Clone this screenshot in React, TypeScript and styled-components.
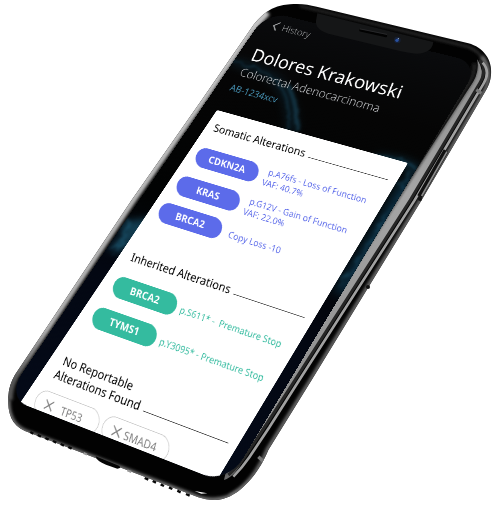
import React from "react";
import styled, { createGlobalStyle } from "styled-components";

type Point = [number, number];

/* Projects a flat width x height rectangle onto four corners (clockwise from top left). */
function projectOnto(width: number, height: number, corners: Point[]): string {
  const [[x0, y0], [x1, y1], [x2, y2], [x3, y3]] = corners;
  const dx1 = x1 - x2;
  const dx2 = x3 - x2;
  const sx = x0 - x1 + x2 - x3;
  const dy1 = y1 - y2;
  const dy2 = y3 - y2;
  const sy = y0 - y1 + y2 - y3;
  const den = dx1 * dy2 - dx2 * dy1;
  const g = (sx * dy2 - dx2 * sy) / den;
  const h = (dx1 * sy - sx * dy1) / den;
  const m = [
    (x1 - x0 + g * x1) / width, (y1 - y0 + g * y1) / width, 0, g / width,
    (x3 - x0 + h * x3) / height, (y3 - y0 + h * y3) / height, 0, h / height,
    0, 0, 1, 0,
    x0, y0, 0, 1,
  ];
  return `matrix3d(${m.map((n) => n.toFixed(9)).join(",")})`;
}

const SCREEN = { width: 378, height: 710, sheetLeft: 26, sheetTop: 190, sheetRight: 17 };

const perspective = projectOnto(
  SCREEN.width - SCREEN.sheetLeft - SCREEN.sheetRight,
  SCREEN.height - SCREEN.sheetTop,
  [[217, 110], [408, 163], [217, 480], [20, 403]],
);

const GlobalStyle = createGlobalStyle`
  * { box-sizing: border-box; }
  body { margin: 0; background: #fff; }
  h1, h2, p, ul { margin: 0; padding: 0; }
  button { font: inherit; border: 0; background: none; padding: 0; cursor: pointer; }
`;

const Page = styled.main`
  display: grid;
  justify-content: center;
  align-content: start;
  min-height: 100vh;
  overflow: hidden;
  font-family: "Noto Sans", "Open Sans", sans-serif;
`;

const Device = styled.div`
  position: relative;
  width: 498px;
  height: 508px;
`;

const Layer = styled.svg`
  position: absolute;
  inset: 0;
  width: 100%;
  height: 100%;
  pointer-events: none;
`;

const Screen = styled.div`
  position: absolute;
  top: 0;
  left: 0;
  display: flex;
  flex-direction: column;
  width: ${SCREEN.width}px;
  height: ${SCREEN.height}px;
  overflow: hidden;
  border-radius: 38px;
  background: linear-gradient(#0a0b0d 0, #050505 130px, #020303 350px, #030712 490px, #040a18 100%);
  transform-origin: 0 0;
  transform: ${perspective} translate(-${SCREEN.sheetLeft}px, -${SCREEN.sheetTop}px);
`;

const Nebula = styled.svg`
  position: absolute;
  inset: 0;
  width: 100%;
  height: 100%;
`;

/* Lines stand more upright than the tilted plane they sit on. */
const Line = styled.span<{ $lean?: number }>`
  display: block;
  transform: skewX(${(p) => p.$lean ?? 15}deg);
  transform-origin: 50% 75%;
`;

const Header = styled.header`
  position: relative;
  flex: 0 0 ${SCREEN.sheetTop}px;
  display: flex;
  flex-direction: column;
  align-items: flex-start;
  padding: 12px 24px 0 24px;
`;

const BackButton = styled.button`
  && {
    display: flex;
    align-items: center;
    gap: 8px;
    color: #a9abad;
    font-size: 16px;
    font-weight: 300;
    line-height: 20px;
  }
`;

const PatientName = styled.h1`
  margin-top: 30px;
  color: #fff;
  font-size: 31px;
  font-weight: 400;
  line-height: 36px;
  white-space: nowrap;
`;

const Diagnosis = styled.p`
  margin-top: 4px;
  color: #c3c5c8;
  font-size: 20px;
  font-weight: 300;
  line-height: 28px;
  white-space: nowrap;
`;

const CaseId = styled.p`
  margin-top: 4px;
  color: #4692b4;
  font-size: 16px;
  line-height: 24px;
`;

const Sheet = styled.article`
  position: relative;
  flex: 1;
  margin: 0 ${SCREEN.sheetRight}px 0 ${SCREEN.sheetLeft}px;
  padding: 18px 14px 0 0;
  border-radius: 3px 3px 0 0;
  background: #fff;
`;

const Section = styled.section<{ $inset: number; $space: number }>`
  padding-left: ${(p) => p.$inset}px;
  margin-bottom: ${(p) => p.$space}px;
`;

const SectionTitle = styled.h2`
  display: flex;
  align-items: flex-end;
  gap: 6px;
  color: #000;
  font-size: 18px;
  font-weight: 400;
  line-height: 22px;
  white-space: nowrap;

  &::after {
    content: "";
    flex: 1;
    height: 1px;
    margin-bottom: 5px;
    background: #3c3c3c;
  }
`;

const AlterationList = styled.ul`
  display: grid;
  gap: 20px;
  margin-top: 22px;
  list-style: none;
`;

const Alteration = styled.li<{ $color: string; $column: number }>`
  display: grid;
  grid-template-columns: ${(p) => p.$column}px 1fr;
  align-items: center;
  height: 33px;
  color: ${(p) => p.$color};
`;

const Gene = styled.span<{ $color: string }>`
  width: 112px;
  border-radius: 17px;
  background: ${(p) => p.$color};
  color: #fff;
  font-size: 16px;
  font-weight: 700;
  line-height: 33px;
  text-align: center;
  transform: skewX(18deg);
`;

const Finding = styled.p`
  padding-top: 4px;
  font-size: 14px;
  line-height: 18px;
  white-space: pre;
`;

const ChipRow = styled.div`
  display: flex;
  gap: 6px;
  margin: 15px 0 0 -4px;
`;

const Chip = styled.button`
  && {
    display: flex;
    align-items: center;
    width: 112px;
    height: 37px;
    padding: 0 14px 0 16px;
    border: 1px solid #c9c9c9;
    border-radius: 19px;
    color: #7d7d7d;
    font-size: 16px;
    transform: skewX(18deg);
  }
`;

const ChipLabel = styled.span`
  flex: 1;
  text-align: center;
`;

const SOMATIC = "#5c6bea";
const INHERITED = "#34bb9f";

const somatic = [
  { gene: "CDKN2A", finding: ["p.A76fs - Loss of Function", "VAF: 40.7%"] },
  { gene: "KRAS", finding: ["p.G12V - Gain of Function", "VAF: 22.0%"] },
  { gene: "BRCA2", finding: ["Copy Loss -10"] },
];

const inherited = [
  { gene: "BRCA2", finding: ["p.S611* -  Premature Stop"] },
  { gene: "TYMS1", finding: ["p.Y3095* - Premature Stop"] },
];

const BODY =
  "M870 13 C905 10 925 15 950 20 L1405 130 C1450 142 1478 180 1473 225 C1472 240 1466 258 1458 271 L1265 600 L935 1140 L805 1350 C770 1435 705 1500 645 1500 C625 1500 610 1497 595 1492 L75 1293 C35 1275 22 1240 25 1190 C26 1165 33 1145 45 1124 L395 600 L605 300 L750 90 C780 45 815 16 870 13 Z";

function DeviceBody() {
  return (
    <Layer viewBox="0 0 1494 1524" aria-hidden="true">
      <defs>
        <clipPath id="body"><path d={BODY} /></clipPath>
        <filter id="soft" x="-10%" y="-10%" width="120%" height="120%"><feGaussianBlur stdDeviation="4" /></filter>
        <linearGradient id="steel" x1="1430" y1="200" x2="700" y2="1440" gradientUnits="userSpaceOnUse">
          <stop offset="0" stopColor="#8e8e8e" />
          <stop offset="0.3" stopColor="#a5a5a5" />
          <stop offset="0.85" stopColor="#8c8c8c" />
          <stop offset="1" stopColor="#6a6a6a" />
        </linearGradient>
        <linearGradient id="rim" x1="750" y1="90" x2="40" y2="1150" gradientUnits="userSpaceOnUse">
          <stop offset="0" stopColor="#c2c2c2" />
          <stop offset="0.85" stopColor="#b0b0b0" />
          <stop offset="1" stopColor="#555" />
        </linearGradient>
      </defs>
      <path d={BODY} fill="#020202" />
      <g clipPath="url(#body)" fill="none">
        <path d="M800 35 L750 90 L605 300 L395 600 L45 1124 Q25 1160 25 1200" stroke="url(#rim)" strokeWidth="26" filter="url(#soft)" />
        <path d="M25 1200 Q24 1270 75 1293 L595 1492 Q680 1520 760 1440" stroke="#777" strokeWidth="12" filter="url(#soft)" />
        <path d="M790 66 L628 304 L428 604 L78 1126" stroke="#77787c" strokeWidth="2" />
        <path d="M900 18 L1400 139 Q1450 155 1460 210" stroke="#3c3c3c" strokeWidth="5" filter="url(#soft)" />
        <path d="M1445 170 Q1480 210 1455 271 L1262 600 L932 1140 L802 1350 Q760 1450 690 1488" stroke="#6b6b6b" strokeWidth="12" filter="url(#soft)" />
        <path d="M1432 178 Q1438 215 1419 246 L1190 600 L850 1130 L738 1295 Q685 1375 672 1440 Q705 1430 735 1370 L790 1280 L885 1140 L1229 600 L1440 245 Q1455 215 1432 178 Z" fill="url(#steel)" />
        <path d="M1424 190 Q1425 225 1402 256 L1184 600 L840 1140 L728 1305 Q690 1360 668 1420" stroke="#1c1c1c" strokeWidth="16" filter="url(#soft)" />
        <path d="M1438 180 Q1463 210 1440 248 L1231 600 L885 1140 L795 1280 L735 1370 Q715 1400 685 1425" stroke="#262626" strokeWidth="9" />
        <path d="M1448 188 Q1472 215 1451 250 L1243 602 L898 1140 L808 1282 L748 1372 Q725 1405 700 1430" stroke="#a0a0a0" strokeWidth="8" />
        <path d="M1338 452 L1259 590" stroke="#111" strokeWidth="16" />
        <path d="M1341 455 L1265 588" stroke="#8c8c8c" strokeWidth="5" />
        <path d="M1429 269 L1444 280 M775 1370 L793 1387" stroke="#777" strokeWidth="10" />
      </g>
      <circle cx="1260" cy="597" r="6" fill="#111" />
      <circle cx="1104" cy="861" r="6" fill="#111" />
      <g stroke="#080808" strokeWidth="7">
        <path d="M91 1296 l9 5 M113 1305 l10 5 M136 1314 l10 5 M159 1323 l10 5 M182 1332 l10 5 M205 1341 l10 5" />
        <path d="M434 1434 l11 5 M458 1443 l10 5 M482 1453 l10 5 M507 1462 l10 5 M532 1472 l10 5 M558 1482 l11 5" />
      </g>
      <path d="M287 1369 L357 1397 Q366 1404 352 1406 L318 1394 Q290 1384 287 1369 Z" fill="#050505" />
      <path d="M251 1359 l10 5 M382 1411 l12 5" stroke="#999" strokeWidth="6" />
      <path d="M584 1473 L622 1480 L604 1481 Z" fill="#fff" />
    </Layer>
  );
}

function Notch() {
  return (
    <Layer viewBox="0 0 1494 1524" aria-hidden="true">
      <path d="M952 40 L1300 126 Q1296 160 1250 161 Q1225 160 1190 151 L985 101 Q945 88 948 62 Z" fill="#151617" />
      <path d="M1081 91 L1158 108" stroke="#020202" strokeWidth="7" strokeLinecap="round" />
      <path d="M1081 87 L1160 103" stroke="#303133" strokeWidth="2" strokeLinecap="round" />
      <circle cx="1192" cy="120" r="10" fill="#172033" />
      <circle cx="1191" cy="121" r="5" fill="#2950a0" />
      <circle cx="1195" cy="116" r="2" fill="#8eacd2" />
    </Layer>
  );
}

function NebulaBackdrop() {
  return (
    <Nebula viewBox="0 0 378 812" preserveAspectRatio="none" aria-hidden="true">
      <defs>
        <filter id="haze" x="-50%" y="-50%" width="200%" height="200%" colorInterpolationFilters="sRGB"><feGaussianBlur stdDeviation="8" /></filter>
        <filter id="wisp" x="-30%" y="-30%" width="160%" height="160%" colorInterpolationFilters="sRGB">
          <feTurbulence type="fractalNoise" baseFrequency="0.06" numOctaves="3" seed="4" result="noise" />
          <feDisplacementMap in="SourceGraphic" in2="noise" scale="22" />
          <feGaussianBlur stdDeviation="2" />
        </filter>
      </defs>
      <g filter="url(#haze)" fill="none">
        <path d="M0 116 Q50 118 82 128 Q130 154 164 220" stroke="#0a2636" strokeWidth="14" opacity="0.6" />
        <path d="M310 226 Q350 212 378 226 L378 300" stroke="#0b3347" strokeWidth="14" opacity="0.7" />
        <path d="M376 250 L376 470" stroke="#0a2c40" strokeWidth="18" />
        <path d="M0 478 Q20 466 30 461 L14 520" stroke="#113c50" strokeWidth="22" />
      </g>
      <g filter="url(#wisp)" fill="none" stroke="#247092">
        <path d="M0 116 Q60 116 88 132 Q132 158 154 216" strokeWidth="4" opacity="0.25" />
        <path d="M108 132 Q140 160 172 216" strokeWidth="7" opacity="0.35" />
        <path d="M295 234 Q330 204 378 222" strokeWidth="4" opacity="0.35" />
        <path d="M370 230 L376 330 L368 460" strokeWidth="3" opacity="0.3" />
        <path d="M4 461 Q20 476 12 526" strokeWidth="5" opacity="0.3" />
      </g>
    </Nebula>
  );
}

interface AlterationsProps {
  items: { gene: string; finding: string[] }[];
  color: string;
  column: number;
}

function Alterations({ items, color, column }: AlterationsProps) {
  return (
    <AlterationList>
      {items.map(({ gene, finding }) => (
        <Alteration key={gene} $color={color} $column={column}>
          <Gene $color={color}>{gene}</Gene>
          <Finding>
            {finding.map((line) => <Line key={line}>{line}</Line>)}
          </Finding>
        </Alteration>
      ))}
    </AlterationList>
  );
}

function ExcludedGene({ name }: { name: string }) {
  return (
    <Chip type="button">
      <svg width="15" height="15" viewBox="0 0 16 16" aria-hidden="true">
        <path d="M1 1 L15 15 M15 1 L1 15" stroke="#858585" strokeWidth="2" />
      </svg>
      <ChipLabel>{name}</ChipLabel>
    </Chip>
  );
}

export default function App() {
  return (
    <>
      <GlobalStyle />
      <Page>
        <Device>
          <DeviceBody />
          <Screen>
            <NebulaBackdrop />
            <Header>
              <BackButton type="button">
                <svg width="11" height="18" viewBox="0 0 11 18" fill="none" aria-hidden="true">
                  <path d="M10 1 L2 9 L10 17" stroke="#a0a2a4" strokeWidth="2" />
                </svg>
                <Line $lean={10}>History</Line>
              </BackButton>
              <PatientName><Line $lean={10}>Dolores Krakowski</Line></PatientName>
              <Diagnosis><Line $lean={10}>Colorectal Adenocarcinoma</Line></Diagnosis>
              <CaseId><Line $lean={10}>AB-1234xcv</Line></CaseId>
            </Header>
            <Sheet>
              <Section $inset={15} $space={53}>
                <SectionTitle><Line>Somatic Alterations</Line></SectionTitle>
                <Alterations items={somatic} color={SOMATIC} column={127} />
              </Section>
              <Section $inset={21} $space={47}>
                <SectionTitle><Line>Inherited Alterations</Line></SectionTitle>
                <Alterations items={inherited} color={INHERITED} column={121} />
              </Section>
              <Section $inset={23} $space={0}>
                <SectionTitle>
                  <span>
                    <Line>No Reportable</Line>
                    <Line>Alterations Found</Line>
                  </span>
                </SectionTitle>
                <ChipRow>
                  <ExcludedGene name="TP53" />
                  <ExcludedGene name="SMAD4" />
                </ChipRow>
              </Section>
            </Sheet>
          </Screen>
          <Notch />
        </Device>
      </Page>
    </>
  );
}
